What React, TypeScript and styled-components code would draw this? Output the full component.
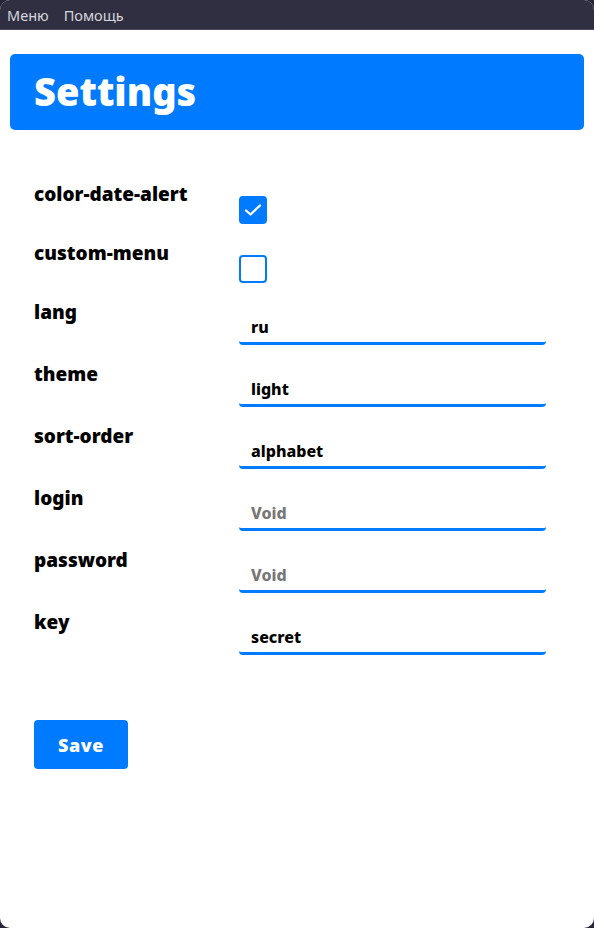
import React, { useState } from "react";
import styled, { createGlobalStyle } from "styled-components";

const Global = createGlobalStyle`
  html, body { margin: 0; padding: 0; background: #26263a; }
  body { font-family: "Noto Sans", "Open Sans", sans-serif; }
  * { box-sizing: border-box; }
`;

const Window = styled.div`
  width: 594px;
  height: 928px;
  background: #ffffff;
  border-radius: 10px;
  overflow: hidden;
  display: flex;
  flex-direction: column;
`;

const MenuBar = styled.div`
  height: 30px;
  background: #2f2f41;
  border-bottom: 1px solid #4a4a5c;
  display: flex;
  align-items: center;
  gap: 15px;
  padding: 0 0 0 7px;
`;

const MenuItem = styled.span`
  color: #d6d6de;
  font-size: 14.5px;
  font-family: "Noto Sans", sans-serif;
`;

const Content = styled.div`
  padding: 24px 10px 0 10px;
`;

const Header = styled.div`
  height: 76px;
  background: #007bff;
  border-radius: 5px;
  display: flex;
  align-items: center;
  padding-left: 24px;
`;

const Title = styled.h1`
  margin: 0;
  color: #ffffff;
  font-family: "Noto Sans", sans-serif;
  font-size: 38px;
  font-weight: 900;
  line-height: 1;
  padding-bottom: 2px;
`;

const Form = styled.div`
  margin-top: 51px;
  padding-left: 24px;
  display: flex;
  flex-direction: column;
  gap: 16px;
`;

const Row = styled.div`
  display: grid;
  grid-template-columns: 205px 307px;
  align-items: start;
`;

const Label = styled.div`
  font-family: "Noto Sans", sans-serif;
  font-size: 19px;
  font-weight: 900;
  color: #000;
  line-height: 26px;
`;

const Control = styled.div<{ $top: number }>`
  padding-top: ${(p) => p.$top}px;
`;

const Box = styled.div<{ $checked: boolean }>`
  width: 28px;
  height: 28px;
  border-radius: 4px;
  border: 2px solid #007bff;
  background: ${(p) => (p.$checked ? "#007bff" : "#ffffff")};
  display: flex;
  align-items: center;
  justify-content: center;
  cursor: pointer;
`;

const Input = styled.input`
  display: block;
  width: 100%;
  height: 34px;
  border: none;
  border-bottom: 3px solid #007bff;
  border-radius: 4px;
  outline: none;
  background: #fff;
  padding: 0 12px;
  font-family: "Noto Sans", sans-serif;
  font-size: 16px;
  font-weight: 800;
  color: #000;
  &::placeholder {
    color: #777777;
    opacity: 1;
  }
`;

const SaveButton = styled.button`
  margin-top: 49px;
  width: 94px;
  height: 49px;
  background: #007bff;
  border: none;
  border-radius: 4px;
  color: #fff;
  font-family: "Noto Sans", sans-serif;
  font-size: 18px;
  font-weight: 900;
  letter-spacing: 0.6px;
  cursor: pointer;
`;

const Check = () => (
  <svg width="18" height="14" viewBox="0 0 18 14" fill="none">
    <path d="M2 7.5 L6.5 11.5 L16 2.5" stroke="#fff" strokeWidth="2.3" strokeLinecap="round" strokeLinejoin="round" />
  </svg>
);

const CheckRow = ({ label, checked }: { label: string; checked: boolean }) => {
  const [on, setOn] = useState(checked);
  return (
    <Row>
      <Label>{label}</Label>
      <Control $top={15}>
        <Box $checked={on} onClick={() => setOn(!on)}>{on && <Check />}</Box>
      </Control>
    </Row>
  );
};

const TextRow = ({ label, value }: { label: string; value: string }) => (
  <Row>
    <Label>{label}</Label>
    <Control $top={12}>
      <Input defaultValue={value} placeholder="Void" />
    </Control>
  </Row>
);

export default function App() {
  return (
    <>
      <Global />
      <Window>
        <MenuBar>
          <MenuItem>Меню</MenuItem>
          <MenuItem>Помощь</MenuItem>
        </MenuBar>
        <Content>
          <Header>
            <Title>Settings</Title>
          </Header>
          <Form>
            <CheckRow label="color-date-alert" checked={true} />
            <CheckRow label="custom-menu" checked={false} />
            <TextRow label="lang" value="ru" />
            <TextRow label="theme" value="light" />
            <TextRow label="sort-order" value="alphabet" />
            <TextRow label="login" value="" />
            <TextRow label="password" value="" />
            <TextRow label="key" value="secret" />
            <div>
              <SaveButton>Save</SaveButton>
            </div>
          </Form>
        </Content>
      </Window>
    </>
  );
}
